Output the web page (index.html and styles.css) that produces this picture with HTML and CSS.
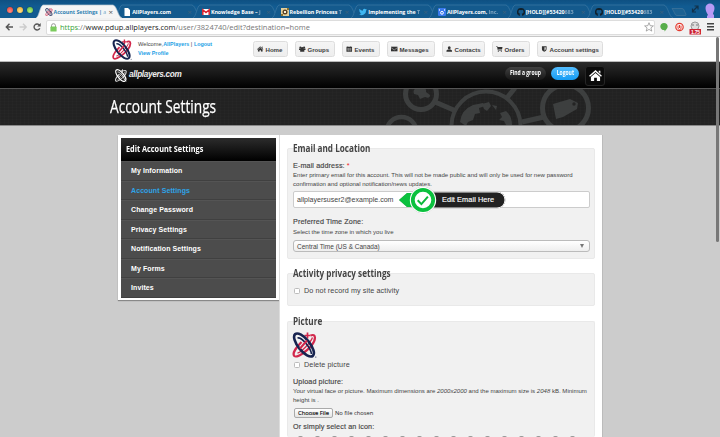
FILE: index.html
```html
<!DOCTYPE html>
<html lang="en">
<head>
<meta charset="utf-8">
<title>Account Settings | AllPlayers</title>
<link rel="stylesheet" href="styles.css">
</head>
<body>
<svg class="defs" aria-hidden="true">
  <symbol id="orbit" viewBox="0 0 24 26">
    <g fill="none">
      <path d="M18 3.500C24 1 23.500 8 19 13.500S4.500 26.500 1.800 24C-.5 21.500 4 15 9 10" stroke="var(--b)" stroke-width="2.200"/>
      <path d="M5 21C8 21 18 11 20 5.500" stroke="var(--b)" stroke-width="1.300"/>
      <path d="M15 .5v6M12 3.500h6" stroke="var(--b)" stroke-width="1.700"/>
      <ellipse cx="11.500" cy="13" rx="14" ry="5.800" transform="rotate(51 11.500 13)" stroke="var(--a)" stroke-width="2.600"/>
      <path d="M5 6C9 5 18 15 19 22" stroke="var(--a)" stroke-width="1.700"/>
      <path d="M7.500 16.500 14.500 8.500" stroke="var(--b)" stroke-width="2"/>
    </g>
    <circle cx="23.300" cy="25" r=".6" fill="var(--a)"/>
  </symbol>
  <symbol id="tabshape" viewBox="0 0 86 14" preserveAspectRatio="none">
    <path d="M0 14C3 13 4 2 7 1H77C81 2 82 13 86 14" fill="var(--fill)" stroke="var(--line)" stroke-width=".7"/>
  </symbol>
  <symbol id="house" viewBox="0 0 14 12"><path d="M7 0 14 6.300 13 7.400 7 2.100 1 7.400 0 6.300ZM10.500.7h1.800v3.200l-1.800-1.600ZM7 3.200l5 4.400V12H8.500V8.500h-3V12H2V7.600Z"/></symbol>
  <symbol id="octocat" viewBox="0 0 16 16"><path d="M8 0a8 8 0 0 0-2.600 15.600c.4 0 .6-.2.600-.5v-1.600c-2 .4-2.600-.8-2.800-1.300 1.500.9 2.200.9 2.900.4.100-.4.300-.7.500-.9-2-.3-3.700-1.200-3.700-4 0-.9.300-1.600.8-2.200-.2-.8-.1-1.500.1-2.100.9 0 1.700.6 2.200.9a7.600 7.600 0 0 1 4 0c.5-.3 1.300-.9 2.200-.9.200.6.300 1.300.1 2.100.5.600.8 1.300.8 2.200 0 2.800-1.700 3.700-3.700 4 .3.300.6.800.6 1.500v2c0 .3.200.5.600.4A8 8 0 0 0 8 0Z"/></symbol>
</svg>

<header class="tabstrip">
  <div class="lights"><i class="red"></i><i class="amber"></i><i class="green"></i></div>
  <nav class="tabs">
    <div class="tab active"><svg class="shape"><use href="#tabshape"/></svg><svg class="fav orbit"><use href="#orbit"/></svg><span>Account Settings | <em>a</em></span><b>×</b></div>
    <div class="tab"><svg class="shape"><use href="#tabshape"/></svg><svg class="fav" viewBox="0 0 8 8"><path d="M1.500 0h3.500l2 2v6H1.500Z" fill="#fff"/></svg><span>AllPlayers.com</span><b>×</b></div>
    <div class="tab"><svg class="shape"><use href="#tabshape"/></svg><svg class="fav" viewBox="0 0 8 8"><path d="M0 1h8v6H0Z" fill="#fff"/><path d="M.8 7V1.800L4 4.600l3.200-2.800V7" fill="none" stroke="#d8232f" stroke-width="1.500"/></svg><span>Knowledge Base – <em>j</em></span><b>×</b></div>
    <div class="tab"><svg class="shape"><use href="#tabshape"/></svg><svg class="fav" viewBox="0 0 8 8"><path d="M0 0h8v8H0Z" fill="#e5cf9a"/><circle cx="4" cy="4" r="2.500" fill="#594226"/><path d="M3 3h2v2H3Z" fill="#f5eedb"/><path d="M0 6h2v2H0ZM6 0h2v2H6Z" fill="#86702f"/></svg><span>Rebellion Princess <em>T</em></span><b>×</b></div>
    <div class="tab"><svg class="shape"><use href="#tabshape"/></svg><svg class="fav" viewBox="0 0 24 24"><path d="M24 4.600a10 10 0 0 1-2.800.8 5 5 0 0 0 2.100-2.700 10 10 0 0 1-3.100 1.200 4.900 4.900 0 0 0-8.400 4.500A14 14 0 0 1 1.700 3.100a4.900 4.900 0 0 0 1.500 6.600 5 5 0 0 1-2.200-.6 4.900 4.900 0 0 0 3.900 4.900 5 5 0 0 1-2.200.1 4.900 4.900 0 0 0 4.600 3.400A9.900 9.900 0 0 1 0 19.500 14 14 0 0 0 21.500 7.100 10 10 0 0 0 24 4.600Z" fill="#40b7f2"/></svg><span>Implementing the <em>T</em></span><b>×</b></div>
    <div class="tab"><svg class="shape"><use href="#tabshape"/></svg><svg class="fav" viewBox="0 0 8 8"><rect width="8" height="8" rx="1" fill="#3979ed"/><path d="M1.500 1v2M6.500 1v2" stroke="#fff" stroke-width=".6"/><circle cx="4" cy="4.800" r="1.400" fill="none" stroke="#fff"/></svg><span>AllPlayers.com, <em>Inc.</em></span><b>×</b></div>
    <div class="tab"><svg class="shape"><use href="#tabshape"/></svg><svg class="fav gh"><use href="#octocat"/></svg><span>[HOLD][#53420<em>683</em></span><b>×</b></div>
    <div class="tab"><svg class="shape"><use href="#tabshape"/></svg><svg class="fav gh"><use href="#octocat"/></svg><span>[HOLD][#53420<em>683</em></span><b>×</b></div>
  </nav>
  <svg class="extras" viewBox="0 0 50 18"><path d="M1 8.500h10q1.500 0 2 1.500l2 4.500q.5 1-1 1H6q-1.500 0-2-1.500L2 10Z" fill="#1c6293" stroke="#49799c" stroke-width=".6"/><path d="m22 11 4.500-4.500M23.500 6h3.500v3.500M21.500 8.500V12H25" fill="none" stroke="#12324b" stroke-width="1.200"/><path d="M34.500 8C34.500 2 43.500 2 43.500 8c0 3-1.500 4-1.500 6l1 1v3h-7v-2l1-1c-1-2-2.500-4-2.500-7Z" fill="#b79af5"/></svg>
</header>

<div class="toolbar">
  <svg class="arrows" viewBox="0 0 40 14"><g fill="none" stroke-width="1.400"><path d="M8 7H1.500M4.500 3.800 1.300 7l3.200 3.200" stroke="#555"/><path d="M14.500 7H21M18 3.800 21.200 7 18 10.200" stroke="#ccc"/><path d="M34.500 5.200a3 3 0 1 0 .3 3" stroke="#555"/></g><path d="M35.700 3v3.500h-3.500Z" fill="#555"/></svg>
  <div class="omnibox">
    <svg class="lock" viewBox="0 0 7 9"><path d="M1.500 4V2.700a2 2 0 0 1 4 0V4" fill="none" stroke="#999" stroke-width="1"/><rect x=".4" y="3.600" width="6.200" height="5" rx=".6" fill="#7ccb5e"/></svg>
    <span class="url"><i>https</i><em>://</em>www.pdup.allplayers.com<em>/user/3824740/edit?destination=home</em></span>
    <svg class="star" viewBox="0 0 10 10"><path d="m5 .7 1.200 3 3.200.2-2.500 2 .9 3.200L5 7.400 2.200 9.100l.9-3.200-2.500-2 3.200-.2Z" fill="#fff" stroke="#888" stroke-width=".7"/></svg>
  </div>
  <svg class="ext" viewBox="0 0 64 18"><path d="M9 5a3.700 3.700 0 0 1 3.700 3.500c0 2-1.700 3.200-3.200 5V12A3.600 3.600 0 0 1 5.300 8.500 3.700 3.700 0 0 1 9 5Z" fill="#58ae4b"/><circle cx="24.500" cy="9" r="3.700" fill="#fff" stroke="#e33b30" stroke-width="1.200"/><path d="M23 7.500v3l1.500 1.300 1.500-1V7.500M24.500 7v3" stroke="#e33b30" fill="none"/><circle cx="40" cy="8" r="4" fill="#ddd" stroke="#999"/><circle cx="38" cy="7" r=".7" fill="#555"/><circle cx="42" cy="7" r=".7" fill="#555"/><rect x="34.500" y="11" width="11.500" height="5.500" fill="#cc202f"/><text x="36" y="15.700" font-size="5" font-weight="bold" fill="#fff" textLength="9">1.75</text><path d="M52 5.800h7M52 8.800h7M52 11.800h7" stroke="#444" stroke-width="1.600"/></svg>
</div>

<div class="userbar">
  <svg class="logo orbit"><use href="#orbit"/></svg>
  <div class="welcome"><p>Welcome,<a>AllPlayers</a> | <a>Logout</a></p><p><a>View Profile</a></p></div>
  <nav class="buttons">
    <a class="w-home"><svg viewBox="0 0 14 12"><use href="#house"/></svg>Home</a>
    <a class="w-groups"><svg viewBox="0 0 14 12"><circle cx="3" cy="3" r="2.300"/><circle cx="11" cy="3" r="2.300"/><circle cx="7" cy="4.500" r="2.800"/><path d="M0 5h14v3H0ZM2.500 7h9v5h-9Z"/></svg>Groups</a>
    <a class="w-events"><svg viewBox="0 0 14 12"><path d="M1 1h12v11H1ZM3.500 0h1v2h-1ZM9.500 0h1v2h-1Z"/><path d="M2 5.500h10M2 8h10M5 4v7M9 4v7" stroke="#eee" stroke-width=".7"/></svg>Events</a>
    <a class="w-messages"><svg viewBox="0 0 14 12"><path d="M0 1h14v10H0Z"/><path d="m0 3 7 5 7-5" fill="none" stroke="#eee"/></svg>Messages</a>
    <a class="w-contacts"><svg viewBox="0 0 14 12"><ellipse cx="7" cy="3.500" rx="3" ry="3.500"/><path d="M1 12V9l3-2h6l3 2v3Z"/></svg>Contacts</a>
    <a class="w-orders"><svg viewBox="0 0 14 12"><path d="M0 0h3l.5 1.500H14L13 7H4.500L5 8h8v1.200H4L2.200 1.400H0Z"/><circle cx="5" cy="10.800" r="1.200"/><circle cx="11.500" cy="10.800" r="1.200"/></svg>Orders</a>
    <a class="w-account"><svg viewBox="0 0 14 12"><path d="M2 0h10v6c0 3-2 5-5 6-3-1-5-3-5-6Z"/><path d="M7.500 2h2.700v4q0 2-2.700 3.500Z" fill="#eee"/></svg>Account settings</a>
  </nav>
</div>

<div class="brandbar">
  <svg class="mark"><use href="#orbit"/></svg><span class="brand">allplayers.com</span>
  <div class="actions"><a class="find"><span>Find a group</span></a><a class="logout"><span>Logout</span></a><a class="home"><svg><use href="#house"/></svg></a></div>
</div>

<div class="titleband">
  <h1>Account Settings</h1>
  <svg class="network" viewBox="0 0 220 36"><g fill="none" stroke="#3d3f3f"><circle cx="41" cy="5" r="15.500" stroke-width="5"/><circle cx="21.500" cy="43" r="15" stroke-width="4.500"/><circle cx="106" cy="37" r="34.500" stroke-width="4"/><circle cx="185.500" cy="19" r="23" stroke-width="5"/><path d="m55 13 21 9M142 33l22-5M126 10l9-11" stroke-width="5"/></g><g fill="#3d3f3f"><path d="M34 5q-2-6 4-5l4-1q5 0 4 4l4 3q0 4-5 2l-5 2-2-4ZM80 33q1-12 13-17l10-2 2 3-6 2 1 5-5 1-2 6-5 2-2 4ZM102 15l7-2 2 4-4 5-3-2ZM112 16l5 1-1 4ZM120 24l6-2q6 5 6 14h-6l-2-4-5-1 3-3ZM173 15l17-5 8 4-1 6-14 8-7 2Z"/></g><circle cx="194" cy="15" r="1.700" fill="#242424"/></svg>
</div>

<main>
  <aside>
    <h2><span>Edit Account Settings</span></h2>
    <ul><li>My Information</li><li class="current">Account Settings</li><li>Change Password</li><li>Privacy Settings</li><li>Notification Settings</li><li>My Forms</li><li>Invites</li></ul>
  </aside>
  <section class="content">
    <div class="group g1">
      <h3><span>Email and Location</span></h3>
      <label class="email">E-mail address: <i>*</i></label>
      <p class="hint">Enter primary email for this account. This will not be made public and will only be used for new password</p>
      <p class="hint">confirmation and optional notification/news updates.</p>
      <div class="field"><span>allplayersuser2@example.com</span>
        <div class="callout"><svg viewBox="0 0 108 30"><g class="shadow"><path d="M24 7h74a8 8 0 0 1 0 16H24Z" fill="#222" stroke="#eee"/><path d="M0 15 8 8h10v14H8Z" fill="#0bc13e"/><circle cx="24" cy="15" r="13.200" fill="#fff"/><circle cx="24" cy="15" r="10.200" fill="#fff" stroke="#0bc13e" stroke-width="3.800"/><path d="m18.700 15.300 3.700 3.800 6.500-7.500" fill="none" stroke="#0bb83a" stroke-width="2"/></g></svg><span>Edit Email Here</span></div>
      </div>
      <label class="zone">Preferred Time Zone:</label>
      <p class="hint zh">Select the time zone in which you live</p>
      <div class="select"><span>Central Time (US &amp; Canada)</span><svg viewBox="0 0 4 4"><path d="M0 0h4L2 4Z"/></svg></div>
    </div>
    <div class="group g2">
      <h3><span>Activity privacy settings</span></h3>
      <div class="check"><i></i><span>Do not record my site activity</span></div>
    </div>
    <div class="group g3">
      <h3><span>Picture</span></h3>
      <svg class="avatar orbit"><use href="#orbit"/></svg>
      <div class="check"><i></i><span>Delete picture</span></div>
      <label class="upload">Upload picture:</label>
      <p class="hint">Your virtual face or picture. Maximum dimensions are <em>2000x2000</em> and the maximum size is <em>2048</em> kB. Minimum</p>
      <p class="hint">height is .</p>
      <div class="file"><button>Choose File</button><span>No file chosen</span></div>
      <label class="simply">Or simply select an icon:</label>
      <div class="iconrow"><i></i><i></i><i></i><i></i><i></i><i></i><i></i><i></i><i></i><i></i><i></i><i></i><i></i><i></i><i></i><i></i><i></i></div>
    </div>
  </section>
</main>
<div class="scrollbar"></div>
</body>
</html>
```

FILE: styles.css
```css
* { box-sizing: border-box; }
body { margin: 0; width: 720px; height: 437px; overflow: hidden; position: relative; background: #ccc; font-family: "Liberation Sans", sans-serif; font-size: 7px; color: #444; }
h1, h2, h3, p, ul { margin: 0; padding: 0; font-weight: normal; }
svg { display: block; flex: none; overflow: hidden; }
.defs { position: absolute; width: 0; height: 0; }
i, em { font-style: normal; }
.orbit { --a: #17234f; --b: #d2284c; }
.tabstrip { height: 18px; background: linear-gradient(#0e5082, #115b91 35%, #115b91); display: flex; align-items: flex-end; }
.lights { display: flex; gap: 4px; width: 38px; padding: 0 0 5px 7px; flex: none; }
.lights i { width: 6px; height: 6px; border-radius: 50%; box-shadow: 0 0 1px #123; }
.red { background: radial-gradient(circle at 50% 70%, #ff8c80, #e03b32); }
.amber { background: radial-gradient(circle at 50% 70%, #ffdf85, #eda426); }
.green { background: radial-gradient(circle at 50% 70%, #b6ee7c, #57b43a); }
.tabs { display: flex; }
.tab { position: relative; z-index: 1; width: 78.700px; height: 14px; display: flex; align-items: center; padding: 2px 0 0 6.500px; --fill: #145a8d; --line: #3e78a3; color: #fff; font: bold 5.350px/10px "Open Sans", sans-serif; }
.tab.active { --fill: #f5f5f5; --line: #b9c5d0; z-index: 2; color: #3283b3; }
.shape { position: absolute; left: -2px; top: 0; width: 86px; height: 14px; z-index: -1; }
.fav { width: 8px; height: 8px; }
.fav.gh { fill: #11202b; }
.tab span { width: 55px; margin-left: 1px; white-space: nowrap; letter-spacing: -.04px; }
.tab span em { opacity: .45; }
.tab b { width: 6px; font: 8px/10px "Open Sans", sans-serif; color: #3c617c; }
.tab.active b { color: #555; }
.extras { width: 50px; height: 18px; margin-left: 3px; }
.toolbar { height: 19px; background: #f1f1f1; border-bottom: 1px solid #c7c7c7; display: flex; align-items: center; padding-left: 5px; }
.arrows { width: 40px; height: 14px; }
.omnibox { width: 609px; height: 15px; margin-left: 1px; background: #fff; border: 1px solid #ddd; border-radius: 2px; display: flex; align-items: center; padding-left: 3px; }
.lock { width: 7px; height: 9px; }
.url { margin-left: 3px; width: 584px; font: 7.500px/13px "Open Sans", sans-serif; color: #222; white-space: nowrap; }
.url i { color: #37a43c; }
.url em { color: #777; }
.star { width: 10px; height: 10px; }
.ext { width: 64px; height: 18px; }
.userbar { height: 24px; background: #fff; display: flex; align-items: center; padding-left: 112px; }
.logo { width: 20px; height: 21px; }
.welcome { width: 121px; padding-left: 6px; font-size: 5.700px; line-height: 9px; white-space: nowrap; }
.welcome p { width: 110px; }
.welcome a { color: #1da1e6; font-weight: bold; font-size: 5.400px; }
.buttons { display: flex; gap: 7px; }
.buttons a { height: 16px; border: 1px solid #ddd; border-radius: 2.500px; background: linear-gradient(#f5f5f5, #eee); display: flex; align-items: center; gap: 2px; padding-left: 3px; font-weight: bold; font-size: 6.100px; white-space: nowrap; color: #3c3c3c; fill: #333; }
.buttons svg { width: 6.500px; height: 6px; }
.w-home { width: 35px; }
.w-groups { width: 40px; }
.w-events { width: 38px; }
.w-messages { width: 48px; }
.w-contacts { width: 43px; }
.w-orders { width: 38px; }
.w-account { width: 66px; }
.brandbar { height: 27px; border-top: 1px solid #bbb; background: linear-gradient(#2b2b2b, #000); display: flex; align-items: center; padding-left: 114px; }
.mark { width: 14px; height: 13px; --a: #fff; --b: #ddd; margin-top: 1px; }
.brand { width: 376px; margin-left: 1px; font: italic bold 8.200px/12px "Liberation Sans", sans-serif; letter-spacing: -.32px; color: #eee; }
.actions { display: flex; gap: 5px; align-items: center; height: 20px; }
.actions a { height: 13px; border-radius: 7px; display: flex; justify-content: center; align-items: center; color: #fff; margin-top: -4px; font: bold 6.600px/12px "Open Sans", sans-serif; white-space: nowrap; }
.actions a span { transform: scaleX(.76); }
.find { width: 41px; background: linear-gradient(#414141, #171717); }
.logout { width: 28px; background: linear-gradient(#54bdff, #159cf4); }
.actions .home { width: 20px; height: 20px; margin: 1px 0 0 1px; border: 1px solid #252525; border-radius: 3px; background: #0b0b0b; fill: #fff; }
.home svg { width: 13px; height: 11px; }
.titleband { height: 38px; border-top: 1px solid #555; border-bottom: 1px solid #888; background: repeating-linear-gradient(90deg, rgba(255,255,255,.012) 0 1px, transparent 1px 4px), repeating-linear-gradient(#242424 0 1px, #222 1px 3px); display: flex; padding-left: 110px; }
h1 { width: 270px; font: 18.800px/34px "Open Sans", sans-serif; color: #fff; white-space: nowrap; transform: scaleX(.73); transform-origin: left; -webkit-text-stroke: .25px #fff; }
.network { width: 220px; height: 36px; }
main { display: flex; align-items: flex-start; padding: 9px 0 0 118px; }
aside { width: 161px; height: 165px; padding: 2.500px 3px; background: #fff; box-shadow: 0 1px 1px #888; }
aside h2 { height: 23.500px; padding-left: 5px; background: linear-gradient(#2c2c2c, #000); color: #fff; font: bold 9.500px/22px "Open Sans", sans-serif; }
aside h2 span, h3 span { display: inline-block; white-space: nowrap; transform-origin: left; transform: scaleX(.77); }
aside ul { list-style: none; background: #4c4c4c; }
aside li { height: 19.500px; padding-left: 10px; border-top: 1px solid #545454; border-bottom: 1px solid #404040; color: #fff; font-weight: bold; font-size: 7px; line-height: 17.500px; letter-spacing: .09px; }
aside li.current { color: #2ea4e8; }
.content { width: 324px; height: 302px; padding: 13px 7px 0; background: #fff; border-left: 1px solid #ddd; border-right: 1px solid #bbb; }
.group { background: #f1f1f1; border: 1px solid #e9e9e9; border-radius: 2px; padding: 0 5px; display: flow-root; }
.g1 { height: 111px; }
.g2 { height: 33px; margin-top: 14px; }
.g3 { height: 116px; margin-top: 15px; border-bottom: 0; }
h3 { height: 12px; margin-top: -7px; font: bold 10.200px/12px "Open Sans", sans-serif; color: #444; }
h3 span { transform: scaleX(.8); }
.group label { display: block; height: 10px; font-size: 7.200px; line-height: 10px; letter-spacing: .12px; color: #444; -webkit-text-stroke: .15px #444; }
.group label i { color: #e22; -webkit-text-stroke: 0; }
.hint { height: 9px; font-size: 6.060px; line-height: 9px; white-space: nowrap; color: #444; }
.hint em { font-style: italic; }
.email { margin-top: 7px; }
.field { position: relative; width: 297px; height: 17px; margin-top: 2px; border: 1px solid #ccc; border-radius: 2px; background: #fff; padding-left: 3px; line-height: 15px; font-size: 7.050px; }
.callout { position: absolute; left: 105px; top: -7px; width: 108px; height: 30px; }
.callout svg { width: 108px; height: 30px; }
.shadow { filter: drop-shadow(0 .5px .5px #999); }
.callout span { position: absolute; left: 43px; top: 7px; font-size: 7.300px; line-height: 16px; letter-spacing: .1px; color: #fff; white-space: nowrap; -webkit-text-stroke: .15px #fff; }
.zone { margin-top: 9px; }
.zh { margin-top: 1px; }
.select { height: 12px; width: 297px; margin-top: 3px; border: 1px solid #bbb; border-radius: 3px; background: linear-gradient(#fff, #eee); display: flex; align-items: center; justify-content: space-between; padding: 0 5px 0 3px; font-size: 6.500px; }
.select svg { width: 4px; height: 4px; fill: #777; }
.check { height: 9px; display: flex; align-items: center; gap: 4px; padding-left: 1px; font-size: 7.200px; letter-spacing: .1px; white-space: nowrap; }
.check i { width: 6px; height: 6px; border: 1px solid #bbb; border-radius: 1.500px; background: #fff; }
.g2 .check { margin-top: 7px; }
.avatar { width: 25px; height: 26px; margin: 5px 0 0 -1px; }
.g3 .check { margin-top: 2px; }
.upload { margin-top: 8px; }
.file { display: flex; height: 10px; align-items: center; margin-top: 3px; padding-left: 1px; gap: 2px; font: 5.800px/9px "Open Sans", sans-serif; color: #222; }
.file button { width: 39px; height: 10px; padding: 0; border: 1px solid #aaa; border-radius: 2px; background: linear-gradient(#fff, #e5e5e5); font: 5.800px/8px "Open Sans", sans-serif; color: #111; -webkit-text-stroke: .15px #111; }
.simply { margin-top: 4px; }
.iconrow { display: flex; gap: 12px; height: 2px; margin-top: 4px; padding-left: 5px; }
.iconrow i { width: 5px; height: 2px; border-radius: 2px 2px 0 0; background: #999; }
.scrollbar { position: absolute; left: 716px; top: 37px; width: 3px; height: 205px; border-radius: 2px; background: #777; }
```
